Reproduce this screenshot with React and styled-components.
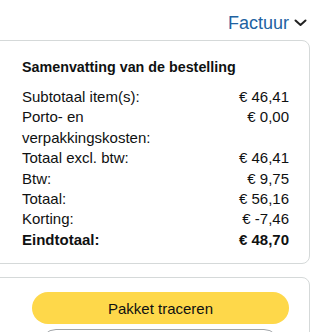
import React from 'react';
import styled, { createGlobalStyle } from 'styled-components';

const rows = [
  { label: 'Subtotaal item(s):', value: '€ 46,41' },
  { label: 'Porto- en verpakkingskosten:', value: '€ 0,00' },
  { label: 'Totaal excl. btw:', value: '€ 46,41' },
  { label: 'Btw:', value: '€ 9,75' },
  { label: 'Totaal:', value: '€ 56,16' },
  { label: 'Korting:', value: '€ -7,46' },
  { label: 'Eindtotaal:', value: '€ 48,70', bold: true },
];

const App = () => {
  return (
    <Page>
      <GlobalStyle />
      <Column>
        <InvoiceBar>
          <InvoiceLink>Factuur</InvoiceLink>
          <svg width="13" height="8" viewBox="0 0 13 8">
            <polyline points="1.5,1.5 6.5,6 11.5,1.5" fill="none" stroke="#222" strokeWidth="2" strokeLinecap="round" strokeLinejoin="round" />
          </svg>
        </InvoiceBar>

        <Card>
          <Title>Samenvatting van de bestelling</Title>
          {rows.map((r) => (
            <Row key={r.label} bold={r.bold}>
              <Label>{r.label}</Label>
              <Value>{r.value}</Value>
            </Row>
          ))}
        </Card>

        <ActionCard>
          <Actions>
            <PrimaryButton>Pakket traceren</PrimaryButton>
            <SecondaryButton aria-label="Retourneren" />
          </Actions>
        </ActionCard>
      </Column>
    </Page>
  );
};

export default App;

const GlobalStyle = createGlobalStyle`
  html, body {
    margin: 0;
    padding: 0;
    background: #ffffff;
  }
  body {
    font-family: "Liberation Sans", Arial, sans-serif;
    color: #0f1111;
  }
`;

const Page = styled.div`
  width: 320px;
  height: 332px;
  overflow: hidden;
`;

const Column = styled.div`
  margin: 0 10px 0 -14px;
  padding-top: 11px;
`;

const InvoiceBar = styled.div`
  display: flex;
  justify-content: flex-end;
  align-items: center;
  gap: 5px;
  height: 24px;
  padding-right: 3px;
  margin-bottom: 5px;
`;

const InvoiceLink = styled.span`
  font-size: 18px;
  color: #2162a1;
  line-height: 24px;
`;

const Card = styled.div`
  background: #fff;
  border: 1px solid #d5d9d9;
  border-radius: 8px;
  padding: 16px 20px 13px 35px;
`;

const Title = styled.div`
  font-size: 14.3px;
  font-weight: 700;
  line-height: 20px;
  margin-bottom: 10px;
`;

const Row = styled.div`
  display: grid;
  grid-template-columns: 58% 1fr;
  font-size: 15px;
  line-height: 20.4px;
  font-weight: ${(p) => (p.bold ? 700 : 400)};
`;

const Label = styled.div``;

const Value = styled.div`
  text-align: right;
`;

const ActionCard = styled(Card)`
  margin-top: 13px;
  padding: 14px 20px 14px 35px;
`;

const Actions = styled.div`
  display: flex;
  flex-direction: column;
  gap: 5px;
  padding-left: 10px;
`;

const PrimaryButton = styled.button`
  height: 32px;
  border: none;
  border-radius: 16px;
  background: #fed84a;
  font-family: inherit;
  font-size: 15px;
  color: #0f1111;
`;

const SecondaryButton = styled.button`
  height: 32px;
  margin: 0 9px 0 8px;
  border: 1px solid #a0a4a8;
  border-radius: 16px;
  background: #fff;
`;
